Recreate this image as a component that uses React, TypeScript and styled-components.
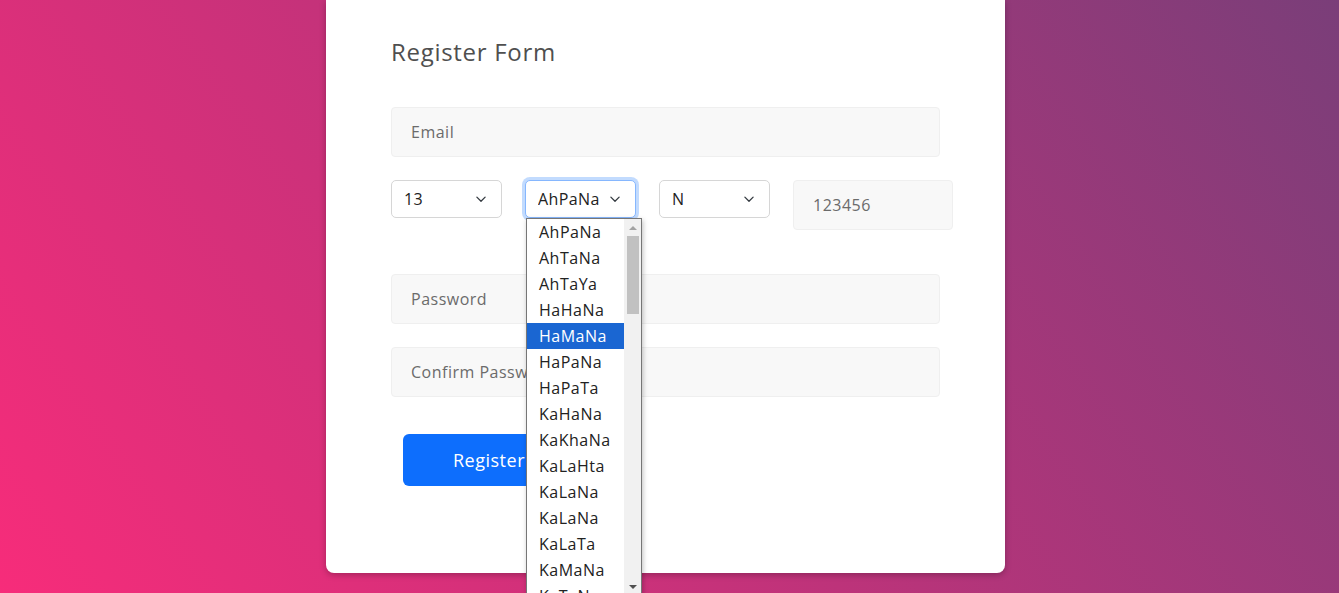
import styled, { createGlobalStyle } from 'styled-components';

const GlobalStyle = createGlobalStyle`
  html, body {
    margin: 0;
    padding: 0;
    height: 593px;
    overflow: hidden;
  }
  body {
    font-family: 'Open Sans', 'Liberation Sans', sans-serif;
  }
  * {
    box-sizing: border-box;
  }
`;

const Page = styled.div`
    height: 593px;
    background: linear-gradient(55deg, #f72c7a 0%, #bd337a 48%, #7a3e79 100%);
    display: flex;
    justify-content: center;
    align-items: flex-start;
    padding-right: 8px;
`;

const Card = styled.div`
    width: 679px;
    height: 573px;
    background: #ffffff;
    border-radius: 0 0 8px 8px;
    box-shadow: 0 2px 6px rgba(0, 0, 0, 0.25);
    padding: 36px 65px 0 65px;
`;

const Title = styled.h2`
    margin: 0 0 39px 0;
    font-size: 24px;
    font-weight: 400;
    color: #4f4f4f;
    letter-spacing: 0.7px;
    line-height: 32px;
`;

const TextInput = styled.div<{ $w?: number }>`
    width: ${(p) => (p.$w ? `${p.$w}px` : '549px')};
    height: 50px;
    flex-shrink: 0;
    background: #f8f8f8;
    border: 1px solid #efefef;
    border-radius: 4px;
    display: flex;
    align-items: center;
    padding-left: 19px;
    font-size: 16px;
    letter-spacing: 0.5px;
    color: #6b6b6b;
`;

const Row = styled.div`
    display: flex;
    align-items: flex-start;
    gap: 23px;
    margin: 23px 0 44px 0;
`;

const SelectBox = styled.div<{ $focused?: boolean }>`
    position: relative;
    width: 111px;
    height: 38px;
    flex-shrink: 0;
    border: 1px solid ${(p) => (p.$focused ? '#86b7fe' : '#d6d6d6')};
    border-radius: 5px;
    display: flex;
    align-items: center;
    justify-content: space-between;
    padding: 0 14px 0 12px;
    font-size: 16px;
    letter-spacing: 0.4px;
    color: #222;
    background: #fff;
    box-shadow: ${(p) => (p.$focused ? '0 0 0 3px rgba(13, 110, 253, 0.25)' : 'none')};
`;

const SelectText = styled.span`
    overflow: hidden;
    white-space: nowrap;
    width: 62px;
`;

const Chevron = () => (
    <svg width="12" height="12" viewBox="0 0 16 16">
        <path d="M2.5 5.5l5.5 5.5 5.5-5.5" fill="none" stroke="#343a40" strokeWidth="1.7" strokeLinecap="round" strokeLinejoin="round" />
    </svg>
);

const Gap = styled.div`
    height: 23px;
`;

const Button = styled.button`
    margin: 37px 0 0 12px;
    height: 52px;
    padding: 0 50px;
    border: none;
    border-radius: 6px;
    background: #0d6efd;
    color: #fff;
    font-family: 'Open Sans', 'Liberation Sans', sans-serif;
    font-size: 18px;
    letter-spacing: 0.5px;
`;

const Dropdown = styled.div`
    position: absolute;
    top: 37px;
    left: 0;
    width: 116px;
    height: 378px;
    border: 1px solid #767676;
    background: #fff;
    box-shadow: 1px 2px 5px rgba(0, 0, 0, 0.25);
    display: flex;
    overflow: hidden;
    z-index: 5;
`;

const Options = styled.div`
    flex: 1;
    display: flex;
    flex-direction: column;
`;

const Option = styled.div<{ $selected?: boolean }>`
    height: 26px;
    flex-shrink: 0;
    padding-left: 12px;
    display: flex;
    align-items: center;
    font-size: 16px;
    letter-spacing: 0.5px;
    color: ${(p) => (p.$selected ? '#fff' : '#222')};
    background: ${(p) => (p.$selected ? '#1a66d2' : 'transparent')};
`;

const Scrollbar = styled.div`
    width: 17px;
    background: #f1f1f1;
    display: flex;
    flex-direction: column;
    align-items: center;
`;

const Arrow = styled.div<{ $down?: boolean }>`
    height: 17px;
    display: flex;
    align-items: center;
    justify-content: center;
    &::after {
        content: '';
        border-left: 4px solid transparent;
        border-right: 4px solid transparent;
        ${(p) => (p.$down ? 'border-top: 4px solid #505050;' : 'border-bottom: 4px solid #a3a3a3;')}
    }
`;

const Thumb = styled.div`
    width: 12px;
    height: 78px;
    background: #c1c1c1;
`;

const Spacer = styled.div`
    flex: 1;
`;

const townships = [
    'AhPaNa',
    'AhTaNa',
    'AhTaYa',
    'HaHaNa',
    'HaMaNa',
    'HaPaNa',
    'HaPaTa',
    'KaHaNa',
    'KaKhaNa',
    'KaLaHta',
    'KaLaNa',
    'KaLaNa',
    'KaLaTa',
    'KaMaNa',
    'KaTaNa',
];

function App() {
    return (
        <>
            <GlobalStyle />
            <Page>
                <Card>
                    <Title>Register Form</Title>
                    <TextInput>Email</TextInput>
                    <Row>
                        <SelectBox>
                            <span>13</span>
                            <Chevron />
                        </SelectBox>
                        <SelectBox $focused>
                            <SelectText>AhPaNa</SelectText>
                            <Chevron />
                            <Dropdown>
                                <Options>
                                    {townships.map((t, i) => (
                                        <Option key={i} $selected={t === 'HaMaNa'}>
                                            {t}
                                        </Option>
                                    ))}
                                </Options>
                                <Scrollbar>
                                    <Arrow />
                                    <Thumb />
                                    <Spacer />
                                    <Arrow $down />
                                </Scrollbar>
                            </Dropdown>
                        </SelectBox>
                        <SelectBox>
                            <span>N</span>
                            <Chevron />
                        </SelectBox>
                        <TextInput $w={160}>123456</TextInput>
                    </Row>
                    <TextInput>Password</TextInput>
                    <Gap />
                    <TextInput>Confirm Password</TextInput>
                    <Button>Register</Button>
                </Card>
            </Page>
        </>
    );
}

export default App;
